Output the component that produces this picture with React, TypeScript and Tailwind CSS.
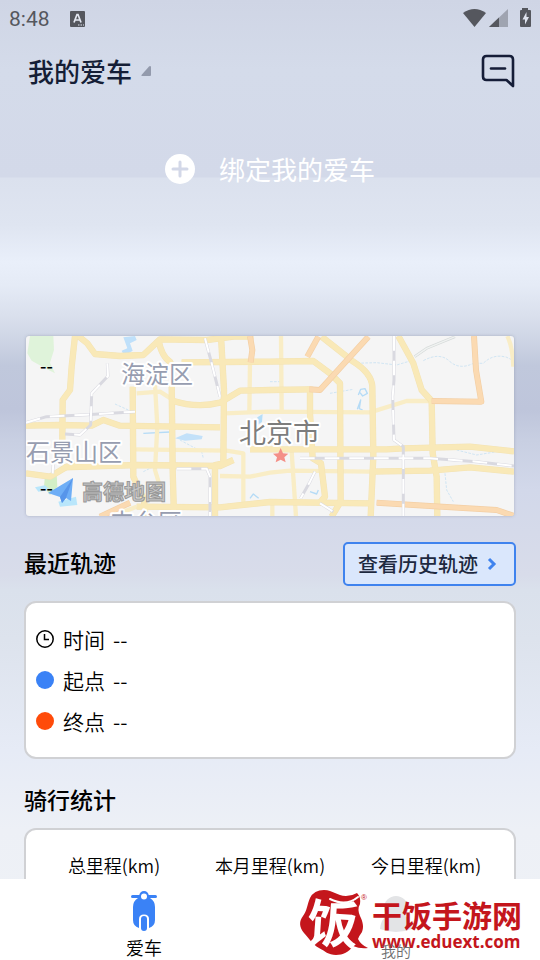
import type { ReactNode } from "react";

const MAP_FONT = '"Noto Sans CJK SC", sans-serif';

// Roads are traced on a grid three times finer than the map's own units
const MINOR_ROADS = [
  "M405 165L412 290L405 420L420 470",
  "M350 190L420 185L452 205",
  "M345 358L620 362L670 370L670 520",
  "M600 438L690 440L750 428L810 422L1050 425",
  "M615 250L750 245L1050 247L1160 213L1235 213",
  "M690 95L688 250",
  "M783 18L785 245",
  "M815 365L828 560",
  "M750 515L640 528",
  "M757 520L757 560",
  "M1462 18Q1478 50 1480 110",
  "M310 545L350 530",
];

const MAIN_ROADS = [
  "M165 18L155 110L150 180L128 210L127 330",
  "M175 18L202 40L225 72L300 78L370 75L420 28L560 30L640 20L700 20",
  "M415 28Q425 80 450 95L458 110",
  "M485 97L750 95L880 93L930 130L960 160L962 515L935 560",
  "M603 18L612 180L610 400L585 405L585 560",
  "M455 160L458 420L462 560",
  "M338 170L340 440L372 510L376 560",
  "M458 212Q530 235 600 218L660 182L750 180L870 178",
  "M18 287L120 285L215 287L250 270L300 287L600 292",
  "M130 412L350 405L600 408L640 390",
  "M18 430L90 440L140 410L170 400",
  "M350 530L600 532L750 516L1050 520",
  "M690 358L1100 358L1150 355L1350 350L1482 364",
  "M870 170L870 250L878 385L903 400L915 500L898 520",
  "M905 20L1000 95Q1055 130 1057 170L1060 380L1052 560",
  "M1135 18L1180 100L1205 180L1235 213L1238 370L1250 440L1252 560",
  "M1050 425L1230 422L1350 412L1482 425",
];

const HIGHWAYS = [
  "M690 18L697 60L692 97",
  "M895 20L862 80",
  "M1045 20L900 180L868 178",
  "M1362 18L1368 120L1384 215L1235 213",
  "M1070 518L1230 528L1430 540L1482 558",
  "M240 560L330 518",
];

const RAILWAYS = [
  "M18 278L80 260L200 254L345 245",
  "M262 100L264 138L215 190L212 285L180 315L135 312",
  "M555 25L575 100L600 200",
  "M1122 18L1122 150L1118 200L1122 330L1150 350L1150 560",
  "M840 385L1230 385L1370 395L1482 408",
  "M470 416L560 416L570 440L570 560",
  "M885 425L870 455L842 505",
  "M100 400L98 430",
  "M900 520L940 545",
];

function CityMap() {
  return (
    <svg
      className="block h-[180px] w-full rounded-[3px] bg-[#f5f5f5] shadow-[0_0_3px_rgba(90,100,120,0.35)]"
      viewBox="0 0 488 180"
      preserveAspectRatio="xMidYMid slice"
      role="img"
      aria-label="北京市地图"
    >
      <g transform="scale(0.33333) translate(-18 -18)" fill="none" strokeLinejoin="round">
        {/* Parks and water */}
        <path d="M30 18H100L102 60L90 98L105 130L70 112L35 92L22 70Z" fill="#dff3da" />
        <path d="M75 435L110 432L112 470L90 495L72 470Z" fill="#d3efc6" />
        <path d="M310 22L345 18L350 30L330 40L338 62L312 78L305 62L322 55Z" fill="#bfe0fa" />
        <path d="M465 325L500 310L548 318L545 328L495 332Z" fill="#c3e1f9" />
        <path d="M45 472L75 466L90 480L55 485ZM115 515L168 500L172 525L120 530Z" fill="#b9e6fb" />
        <path d="M712 262L728 252L726 276L712 285Z" fill="#b5def8" />
        <path
          d="M370 310L450 306M690 505L700 492L716 505M1015 195L1022 178L1035 176L1042 190L1028 198L1020 188M1012 238L1022 210L1018 236L1028 240M870 485L890 492L895 480"
          stroke="#b5dbf6"
          strokeWidth="4"
        />
        <path
          d="M930 190L1000 178M1000 100L1070 98L1130 105L1180 90M1210 92Q1260 65 1290 95Q1320 120 1360 100L1390 100Q1420 70 1460 82L1482 92M285 222L325 240M480 330L545 365L550 385M1310 360L1370 375L1430 365M1275 430L1280 480L1300 515M370 425L420 400M750 155L780 155"
          stroke="#bcdcf2"
          strokeWidth="2"
          strokeDasharray="8 4"
        />
        <path d="M1184 80L1220 55L1305 20" stroke="#d5dad9" strokeWidth="8" />
        <path d="M1184 80L1220 55L1305 20" stroke="#f0f2f1" strokeWidth="4" />

        {MINOR_ROADS.map((d) => (
          <path key={d} d={d} stroke="#f9edc6" strokeWidth="13" />
        ))}
        {MAIN_ROADS.map((d) => (
          <path key={d} d={d} stroke="#f3e3b4" strokeWidth="19" />
        ))}
        {MAIN_ROADS.map((d) => (
          <path key={d} d={d} stroke="#f9e9b8" strokeWidth="16" />
        ))}
        {HIGHWAYS.map((d) => (
          <path key={d} d={d} stroke="#f3cfa5" strokeWidth="18" />
        ))}
        {HIGHWAYS.map((d) => (
          <path key={d} d={d} stroke="#fbdab2" strokeWidth="14" />
        ))}
        {RAILWAYS.map((d) => (
          <path key={d} d={d} stroke="#d9d9e0" strokeWidth="9" />
        ))}
        {RAILWAYS.map((d) => (
          <path key={d} d={d} stroke="#ffffff" strokeWidth="6" strokeDasharray="44 30" />
        ))}

        {/* City centre */}
        <path
          d="M782 354L789 370L805 371L793 382L797 397L782 389L767 397L771 382L759 371L775 370Z"
          fill="#f48f87"
        />
      </g>

      <g fontFamily={MAP_FONT} fontSize="24" stroke="#ffffff" strokeWidth="4" strokeLinejoin="round" paintOrder="stroke">
        <text x="95" y="47" fill="#979db0">海淀区</text>
        <text x="0" y="125" fill="#979db0">石景山区</text>
        <text x="84" y="195" fill="#979db0">丰台区</text>
        <text x="213" y="107" fill="#7d7d7d" fontSize="27">北京市</text>
      </g>

      {/* Map provider mark */}
      <path d="M47 142L22 157L34 161L36 167L40 162L45 165Z" fill="#6eaef6" />
      <path d="M47 142L34 161L36 167L40 162Z" fill="#5795ea" />
      <text
        x="56"
        y="163"
        fontFamily={MAP_FONT}
        fontSize="21"
        fontWeight="700"
        fill="#c6c6c6"
        stroke="#999999"
        strokeWidth="1"
      >
        高德地图
      </text>
      <g fontFamily={MAP_FONT} fontSize="18" fontWeight="500" fill="#000000">
        <text x="14" y="37">--</text>
        <text x="14" y="159">--</text>
      </g>
    </svg>
  );
}

function StatusBar() {
  return (
    <div className="flex h-[38px] items-center justify-between px-2 text-[#55575e]">
      <div className="flex items-center gap-5 pl-px">
        <span className="font-[Roboto,sans-serif] text-[21px] leading-6">8:48</span>
        <svg className="h-4 w-[15px]" viewBox="0 0 15 16">
          <rect width="15" height="16" rx="1" fill="currentColor" />
          <path d="M4 11.500L7 3.500H8L11 11.500M5.200 9H9.800" fill="none" stroke="#e3e7f1" strokeWidth="1.700" />
          <path d="M8 14H9.500M10.500 14H12M13 14H14" stroke="#e3e7f1" strokeWidth="1" />
        </svg>
      </div>
      <svg className="mb-[3px] h-5 w-[69px]" viewBox="0 0 69 20" fill="currentColor">
        <path d="M0 5Q11.500 -3 23 5L11.500 19Z" />
        <path d="M26 19L45 1V19Z" opacity="0.4" />
        <path d="M26 19L36 9.500V19Z" />
        <path d="M59 0H65V2H67Q68 2 68 3V18Q68 19 67 19H58Q57 19 57 18V3Q57 2 58 2H59Z" />
        <path d="M63.500 4L59.500 11.500H62V16.500L66 9H63.500Z" fill="#dfe3ee" />
      </svg>
    </div>
  );
}

function Header() {
  return (
    <header className="flex h-[66px] items-center justify-between pl-7 pr-[25px]">
      <button type="button" className="flex items-center gap-[9px] text-[26px] font-medium leading-9 text-[#151e36]">
        我的爱车
        <svg className="h-[10px] w-[10px]" viewBox="0 0 10 10">
          <path d="M9 0Q10 0 10 1V9Q10 10 9 10H1Q0 10 0.500 9L8 0.500Z" fill="#939aac" />
        </svg>
      </button>
      <button type="button" aria-label="消息">
        <svg className="h-[34px] w-[34px]" viewBox="0 0 34 34" fill="none" stroke="#151d38" strokeWidth="2.600">
          <path d="M32 32V5.500Q32 2 28.500 2H5.500Q2 2 2 5.500V22.500Q2 26 5.500 26H25.500Z" strokeLinejoin="round" />
          <path d="M10 14.500H24" strokeLinecap="round" />
        </svg>
      </button>
    </header>
  );
}

function TrackRow({ icon, label }: { icon: ReactNode; label: string }) {
  return (
    <div className="flex h-[41px] items-center text-[21px] font-[350] leading-7">
      {icon}
      <dt className="ml-[9px]">{label}</dt>
      <dd className="ml-2">--</dd>
    </div>
  );
}

function Watermark() {
  return (
    <div className="pointer-events-none absolute bottom-[3px] right-[18px] flex items-end gap-1">
      <svg className="h-[68px] w-[68px] overflow-visible" viewBox="0 0 68 68" fill="#c4161c">
        <path d="M10 9Q14 1 24 1C33 1 37 7 46 7Q52 7 57 4Q61 8 60 15Q57 20 60 27C63 33 64 38 62 43Q59 47 58 50Q61 56 68 59Q60 60 53 57C49 63 43 66 36 66C28 66 25 62 19 59C12 55 9 49 4 44C-1 38 -1 32 3 27C7 22 7 16 10 9Z" />
        <path d="M30 10Q46 18 58 8" fill="none" stroke="#ffffff" strokeWidth="2" strokeLinecap="round" />
        <text x="64" y="11" textAnchor="middle" fontSize="8" fontFamily="Liberation Sans, sans-serif">®</text>
        <text
          x="33"
          y="54"
          textAnchor="middle"
          fill="#ffffff"
          fontSize="51"
          fontWeight="700"
          fontFamily={MAP_FONT}
          transform="rotate(4 34 34)"
        >
          饭
        </text>
      </svg>
      <div className="pb-px leading-7 text-[#c4161c]">
        <p className="text-[30px] font-bold leading-7">干饭手游网</p>
        <p className="font-['Open_Sans',sans-serif] text-[17px] font-bold leading-7">www.eduext.com</p>
      </div>
    </div>
  );
}

function TabBar() {
  return (
    <nav className="relative grid h-[81px] shrink-0 grid-cols-2 bg-white px-[18px] text-[18px] leading-6">
      <a href="#bike" className="flex flex-col items-center gap-1 pt-3 font-[350] text-black">
        <svg className="h-10 w-[26px]" viewBox="0 0 26 40">
          <path d="M1.500 5.500H24.500" stroke="#3a82f6" strokeWidth="3" strokeLinecap="round" />
          <path
            d="M8 5Q9 0 13 0Q17 0 18 5L19 7Q24 10 24 16V29Q24 35 18 37H8Q2 35 2 29V16Q2 10 7 7Z"
            fill="#3a82f6"
          />
          <circle cx="13" cy="5.500" r="3" fill="#ffffff" />
          <path d="M8 40V28Q8 23.500 13 23.500Q18 23.500 18 28V40Z" fill="#ffffff" />
          <rect x="10" y="25" width="6" height="15" rx="3" fill="#3a82f6" />
        </svg>
        爱车
      </a>
      <a href="#me" className="flex flex-col items-center gap-1 pt-4 text-[15px] font-[350] text-[#6f6f6f]">
        <svg className="h-10 w-10" viewBox="0 0 40 40" fill="#e3e4e6">
          <circle cx="20" cy="13" r="12" />
          <path d="M4 34Q5 19 20 19Q35 19 36 34Q20 40 4 34Z" />
        </svg>
        <span className="relative z-10">我的</span>
      </a>
      <Watermark />
    </nav>
  );
}

const STATS = ["总里程(km)", "本月里程(km)", "今日里程(km)"];

export default function App() {
  return (
    <div className="flex h-screen flex-col overflow-hidden bg-[linear-gradient(180deg,#cfd5e5_0px,#d4dbea_70px,#d3d9e9_177px,#dbe1ee_178px,#dfe5f1_225px,#e9effa_262px,#e5ebf6_285px,#dae0ed_315px,#ced5e5_340px,#c0c8dc_365px,#bec5db_410px,#c8cfe2_440px,#d2d8ea_490px,#d8dcea_575px,#dae1ec_590px,#dde3ed_640px,#e6ebf6_750px,#edf0f6_830px,#eff2f6_960px)] font-['Noto_Sans_CJK_SC',sans-serif]">
      <StatusBar />
      <Header />
      <main className="min-h-0 flex-1 overflow-hidden">
        <div className="flex h-[232px] justify-center pt-[45px]">
          <button type="button" className="flex h-10 items-center gap-6 text-[26px] leading-9 text-white">
            <svg className="h-[30px] w-[30px]" viewBox="0 0 30 30">
              <circle cx="15" cy="15" r="15" fill="#ffffff" />
              <path d="M15 8V22M8 15H22" stroke="#d3d8e8" strokeWidth="3" strokeLinecap="round" />
            </svg>
            绑定我的爱车
          </button>
        </div>

        <div className="px-[26px]">
          <CityMap />
        </div>

        <section className="px-6 pt-[26px]">
          <div className="flex items-center justify-between">
            <h2 className="pb-1 text-[23px] font-medium leading-8 text-black">最近轨迹</h2>
            <a
              href="#history"
              className="flex h-11 items-center gap-2 rounded-[5px] border-2 border-[#3f83ee] bg-[#dae7fc] pl-[13px] pr-4 text-[20px] font-medium leading-7 text-[#1d2940]"
            >
              查看历史轨迹
              <svg className="h-3.5 w-3" viewBox="0 0 12 14" fill="none" stroke="#3f83ee" strokeWidth="3">
                <path d="M3 2L8 7L3 12" />
              </svg>
            </a>
          </div>
          <dl className="mt-[15px] rounded-xl border-2 border-[#d0d1d4] bg-white px-[10px] pb-4 pt-[15px] text-black">
            <TrackRow
              label="时间"
              icon={
                <svg className="h-[18px] w-[18px]" viewBox="0 0 18 18" fill="none" stroke="#000000" strokeWidth="1.500">
                  <circle cx="9" cy="9" r="8.200" />
                  <path d="M8.500 4V9.500H13" />
                </svg>
              }
            />
            <TrackRow label="起点" icon={<span className="h-[18px] w-[18px] rounded-full bg-[#3a82f6]" />} />
            <TrackRow label="终点" icon={<span className="h-[18px] w-[18px] rounded-full bg-[#ff4b0a]" />} />
          </dl>
        </section>

        <section className="px-6 pt-6">
          <h2 className="text-[23px] font-medium leading-8 text-black">骑行统计</h2>
          <ul className="mt-[13px] grid h-40 grid-cols-3 rounded-xl border-2 border-[#d0d1d4] bg-white px-[10px] pt-[23px] text-center text-[18px] font-[350] leading-6 text-black">
            {STATS.map((label) => (
              <li key={label}>{label}</li>
            ))}
          </ul>
        </section>
      </main>
      <TabBar />
    </div>
  );
}
